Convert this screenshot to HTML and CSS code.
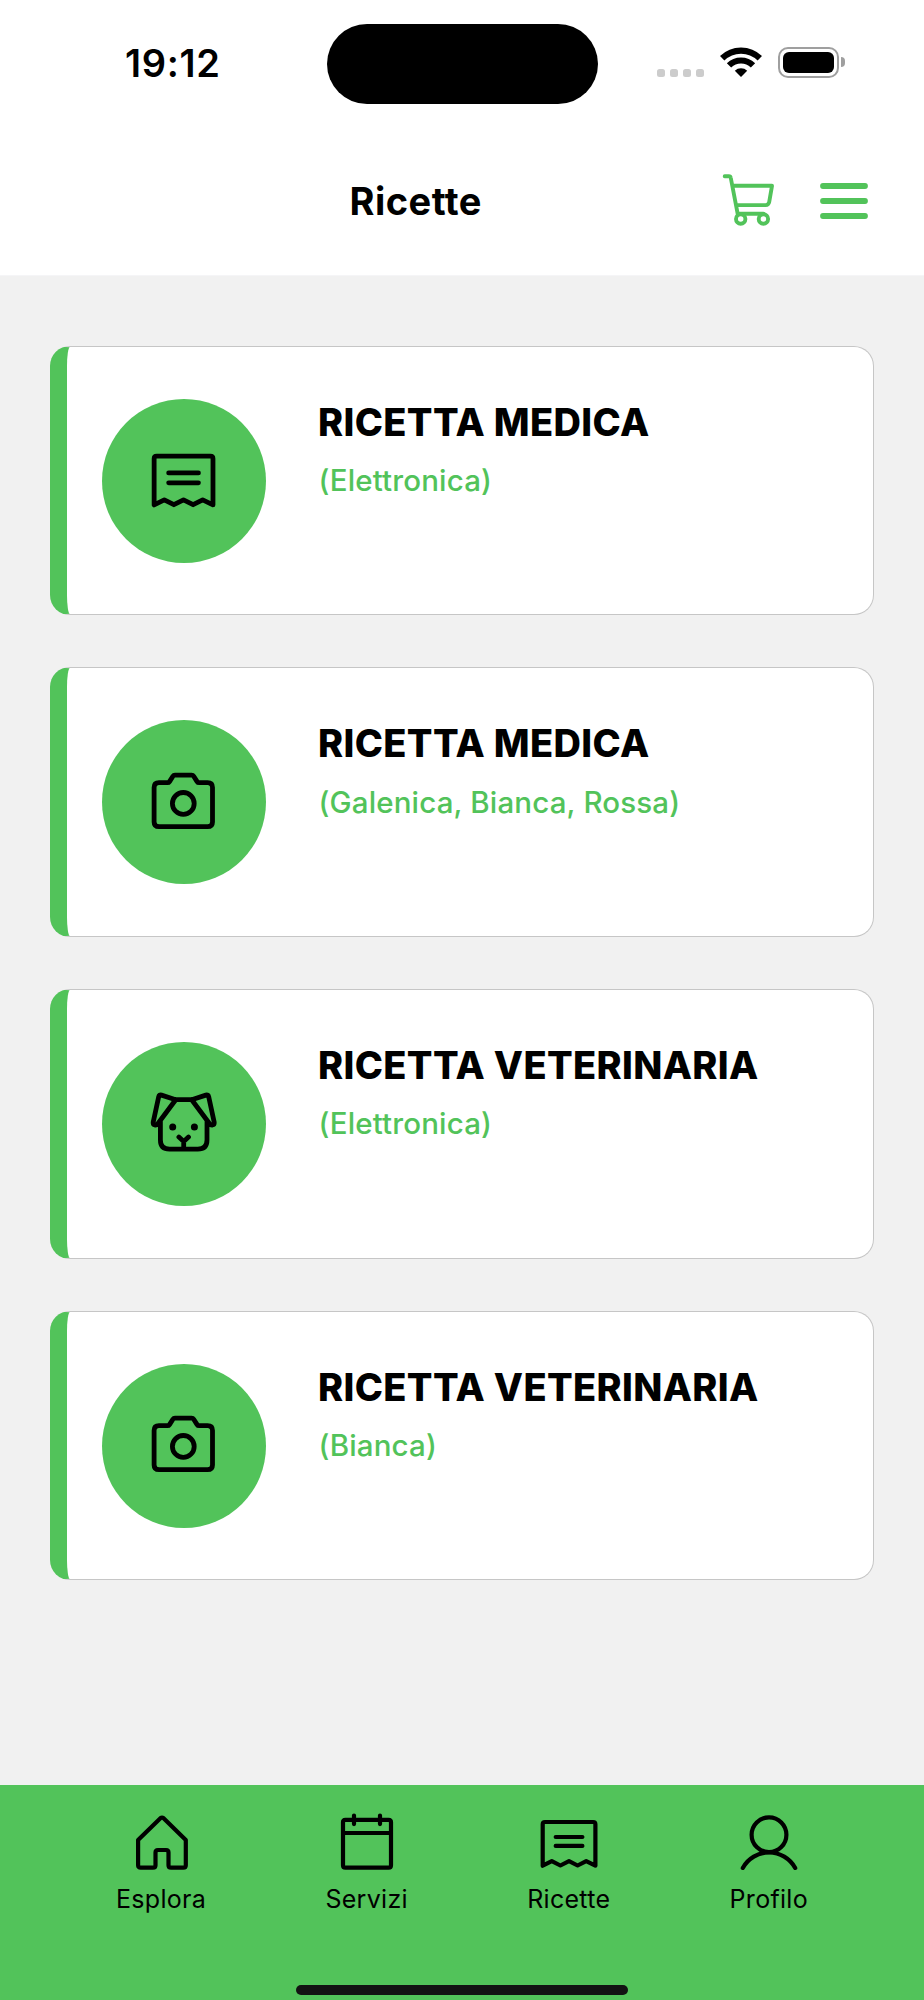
FILE: index.html
```html
<!DOCTYPE html>
<html lang="it">
<head>
<meta charset="utf-8">
<title>Ricette</title>
<link rel="stylesheet" href="styles.css">
</head>
<body>
<svg class="sprite" aria-hidden="true">
  <symbol id="receipt" viewBox="0 0 60 60">
    <path d="M3.7 55.7V14.3Q3.7 12 6 12H54.1Q56.4 12 56.4 14.3V55.7L47.2 51.1L38.6 55.5L30 51.1L21.4 55.5L12.8 51.1ZM16.7 27H43.4M16.7 35.9H43.4"/>
  </symbol>
  <symbol id="camera" viewBox="0 0 67 67">
    <path d="M9 13.7H17.5Q18.8 13.7 19.5 12.6L22.9 7.2Q23.6 6.1 25 6.1H41.6Q43 6.1 43.7 7.2L47.1 12.6Q47.8 13.7 49.1 13.7H57.6Q62.5 13.7 62.5 18.6V53Q62.5 57.7 57.6 57.7H9Q4.1 57.7 4.1 53V18.6Q4.1 13.7 9 13.7Z"/>
    <circle cx="33.3" cy="34.4" r="10.9"/>
  </symbol>
  <symbol id="dog" viewBox="0 0 67 67">
    <path d="M25.7 9.7H41.7M10.4 31V50Q10.4 59.1 19.5 59.1H47.8Q57 59.1 57 50V31M25.7 9.7L11.5 5.1Q9.2 4.4 8.7 6.8L3.3 31.8Q2.8 34.5 5 35Q6.8 35.2 8 33.5ZM41.7 9.7L55.9 5.1Q58.2 4.4 58.7 6.8L64.1 31.8Q64.6 34.5 62.4 35Q60.6 35.2 59.4 33.5ZM28.9 47L33.7 51.4L38.5 47M33.7 51.4V59"/>
    <circle class="dot" cx="22.7" cy="37" r="3.5"/>
    <circle class="dot" cx="44.4" cy="37" r="3.5"/>
  </symbol>
</svg>

<div class="screen">
  <div class="status">
    <span class="time">19:12</span>
    <span class="island"></span>
    <span class="signal"><i></i><i></i><i></i><i></i></span>
    <svg class="wifi" viewBox="0 0 42 32">
      <path class="arc" d="M2.2 12.3A26.8 26.8 0 0 1 39.8 12.3M9 19.4A17.2 17.2 0 0 1 33 19.4"/>
      <path d="M21 31L14.8 24.7A9.3 9.3 0 0 1 27.2 24.7Z"/>
    </svg>
    <span class="battery"><i></i></span>
    <span class="nub"></span>
  </div>

  <header class="header">
    <h1>Ricette</h1>
    <svg class="cart" viewBox="0 0 60 60">
      <path d="M4.7 6.2H8.8Q10.5 6.2 10.8 8L17.7 43.8H43.5M13.7 15.8H52L49.2 32Q48.6 35.1 45.6 35.1H17"/>
      <circle cx="20.7" cy="49" r="4.7"/>
      <circle cx="43.4" cy="49" r="4.7"/>
    </svg>
    <svg class="menu" viewBox="0 0 48 36"><path d="M3 3H45M3 18H45M3 33H45"/></svg>
  </header>

  <main class="list">
    <article class="card">
      <div class="badge"><svg class="icon receipt" viewBox="0 3.8 60 60"><use href="#receipt" width="60" height="60"/></svg></div>
      <div class="info"><h2>RICETTA MEDICA</h2><p>(Elettronica)</p></div>
    </article>
    <article class="card">
      <div class="badge"><svg class="icon"><use href="#camera"/></svg></div>
      <div class="info"><h2>RICETTA MEDICA</h2><p>(Galenica, Bianca, Rossa)</p></div>
    </article>
    <article class="card">
      <div class="badge"><svg class="icon"><use href="#dog"/></svg></div>
      <div class="info"><h2>RICETTA VETERINARIA</h2><p>(Elettronica)</p></div>
    </article>
    <article class="card">
      <div class="badge"><svg class="icon"><use href="#camera"/></svg></div>
      <div class="info"><h2>RICETTA VETERINARIA</h2><p>(Bianca)</p></div>
    </article>
  </main>

  <footer class="footer">
    <nav class="tabs">
      <a class="tab">
        <svg viewBox="0 0 60 60"><path d="M6.1 30L28.4 8.2Q30 6.9 31.6 8.2L53.8 30V55.2Q53.8 57.7 51.3 57.7H39Q36.5 57.7 36.5 55.2V42.4Q36.5 40 34.1 40H25.9Q23.5 40 23.5 42.4V55.2Q23.5 57.7 21 57.7H8.6Q6.1 57.7 6.1 55.2Z"/></svg>
        <span>Esplora</span>
      </a>
      <a class="tab">
        <svg viewBox="0 0 60 60"><path d="M8.4 9.9H51.6Q54 9.9 54 12.3V55.2Q54 57.6 51.6 57.6H8.4Q6 57.6 6 55.2V12.3Q6 9.9 8.4 9.9ZM6 23H54M17 5.6V14.1M43 5.6V14.1"/></svg>
        <span>Servizi</span>
      </a>
      <a class="tab">
        <svg><use href="#receipt"/></svg>
        <span>Ricette</span>
      </a>
      <a class="tab">
        <svg viewBox="0 0 60 60"><circle cx="30" cy="24.7" r="17.4"/><path d="M3.8 58A29.9 29.9 0 0 1 56.2 58"/></svg>
        <span>Profilo</span>
      </a>
    </nav>
    <div class="home-bar"></div>
  </footer>
</div>
</body>
</html>
```

FILE: styles.css
```css
* { box-sizing: border-box; }
body { margin: 0; background: #f1f1f1; color: #000; font-family: Inter, "Liberation Sans", sans-serif; }
h1, h2, p { margin: 0; }
svg { display: block; flex: none; }
.sprite { position: absolute; width: 0; height: 0; }

.screen { width: 924px; height: 2000px; display: flex; flex-direction: column; }

.status { height: 128px; padding: 24.3px 0 0 125px; display: flex; background: #fff; }
.time { width: 201.5px; padding-top: 16px; font-size: 38px; line-height: 46px; font-weight: 600; letter-spacing: 0.7px; }
.island { width: 271px; height: 79.5px; border-radius: 40px; background: #000; }
.signal { display: flex; gap: 5px; margin: 44.7px 0 0 59.5px; }
.signal i { width: 8px; height: 8px; border-radius: 2.5px; background: #ccc; }
.wifi { width: 42px; height: 32px; margin: 21.7px 0 0 15.7px; }
.wifi .arc { fill: none; stroke: #000; stroke-width: 6.2; }
.battery { width: 61px; height: 31px; margin: 22.7px 0 0 16.3px; padding: 3px; border: 2px solid #9f9f9f; border-radius: 10px; }
.battery i { display: block; height: 21px; border-radius: 6px; background: #000; }
.nub { width: 4px; height: 10px; margin: 33.2px 0 0 2px; border-radius: 0 4px 4px 0; background: #9f9f9f; }

.header { height: 148px; padding: 42px 0 0 349.5px; display: flex; background: #fff; border-bottom: 1px solid #f5f5f7; }
.header h1 { width: 370.5px; padding-top: 8px; font-size: 38px; line-height: 46px; font-weight: 700; letter-spacing: 0.5px; }
.cart { width: 60px; height: 60px; fill: none; stroke: #52c35a; stroke-width: 3.9; stroke-linecap: round; stroke-linejoin: round; }
.menu { width: 48px; height: 36px; margin: 13px 0 0 40.2px; stroke: #52c35a; stroke-width: 5.8; stroke-linecap: round; }

.list { flex: 1; padding: 69.6px 50px 0; display: flex; flex-direction: column; gap: 52px; }
.card { height: 269.7px; padding: 52px 20px 0 34.5px; display: flex; gap: 52.5px; background: #fff; border: 1px solid #c6c6c6; border-left: 17px solid #52c35a; border-radius: 20px; }
.badge { width: 164px; height: 164px; display: flex; align-items: center; justify-content: center; flex: none; border-radius: 50%; background: #52c35a; }
.icon { width: 67px; height: 67px; fill: none; stroke: #000; stroke-width: 4.8; stroke-linecap: round; stroke-linejoin: round; }
.icon.receipt { stroke-width: 4.3; overflow: visible; }
.dot { fill: #000; stroke: none; }
.info h2 { font-size: 38px; line-height: 46px; font-weight: 800; letter-spacing: 0.35px; }
.info p { margin: 17.3px 0 0 0.5px; font-size: 29.5px; line-height: 36px; font-weight: 500; letter-spacing: 0.15px; color: #52c35a; }

.footer { height: 215px; padding-top: 25px; display: flex; flex-direction: column; background: #52c35a; }
.tabs { height: 175px; padding: 0 116px; display: flex; justify-content: space-between; }
.tab { display: flex; flex-direction: column; align-items: center; }
.tab svg { width: 60px; height: 60px; fill: none; stroke: #000; stroke-width: 4.2; stroke-linecap: round; stroke-linejoin: round; }
.tab span { margin-top: 14px; font-size: 25px; line-height: 30px; letter-spacing: 0.3px; }
.tab:first-child svg { margin-left: 1px; }
.home-bar { width: 332px; height: 10px; align-self: center; border-radius: 5px; background: #131313; }
```
